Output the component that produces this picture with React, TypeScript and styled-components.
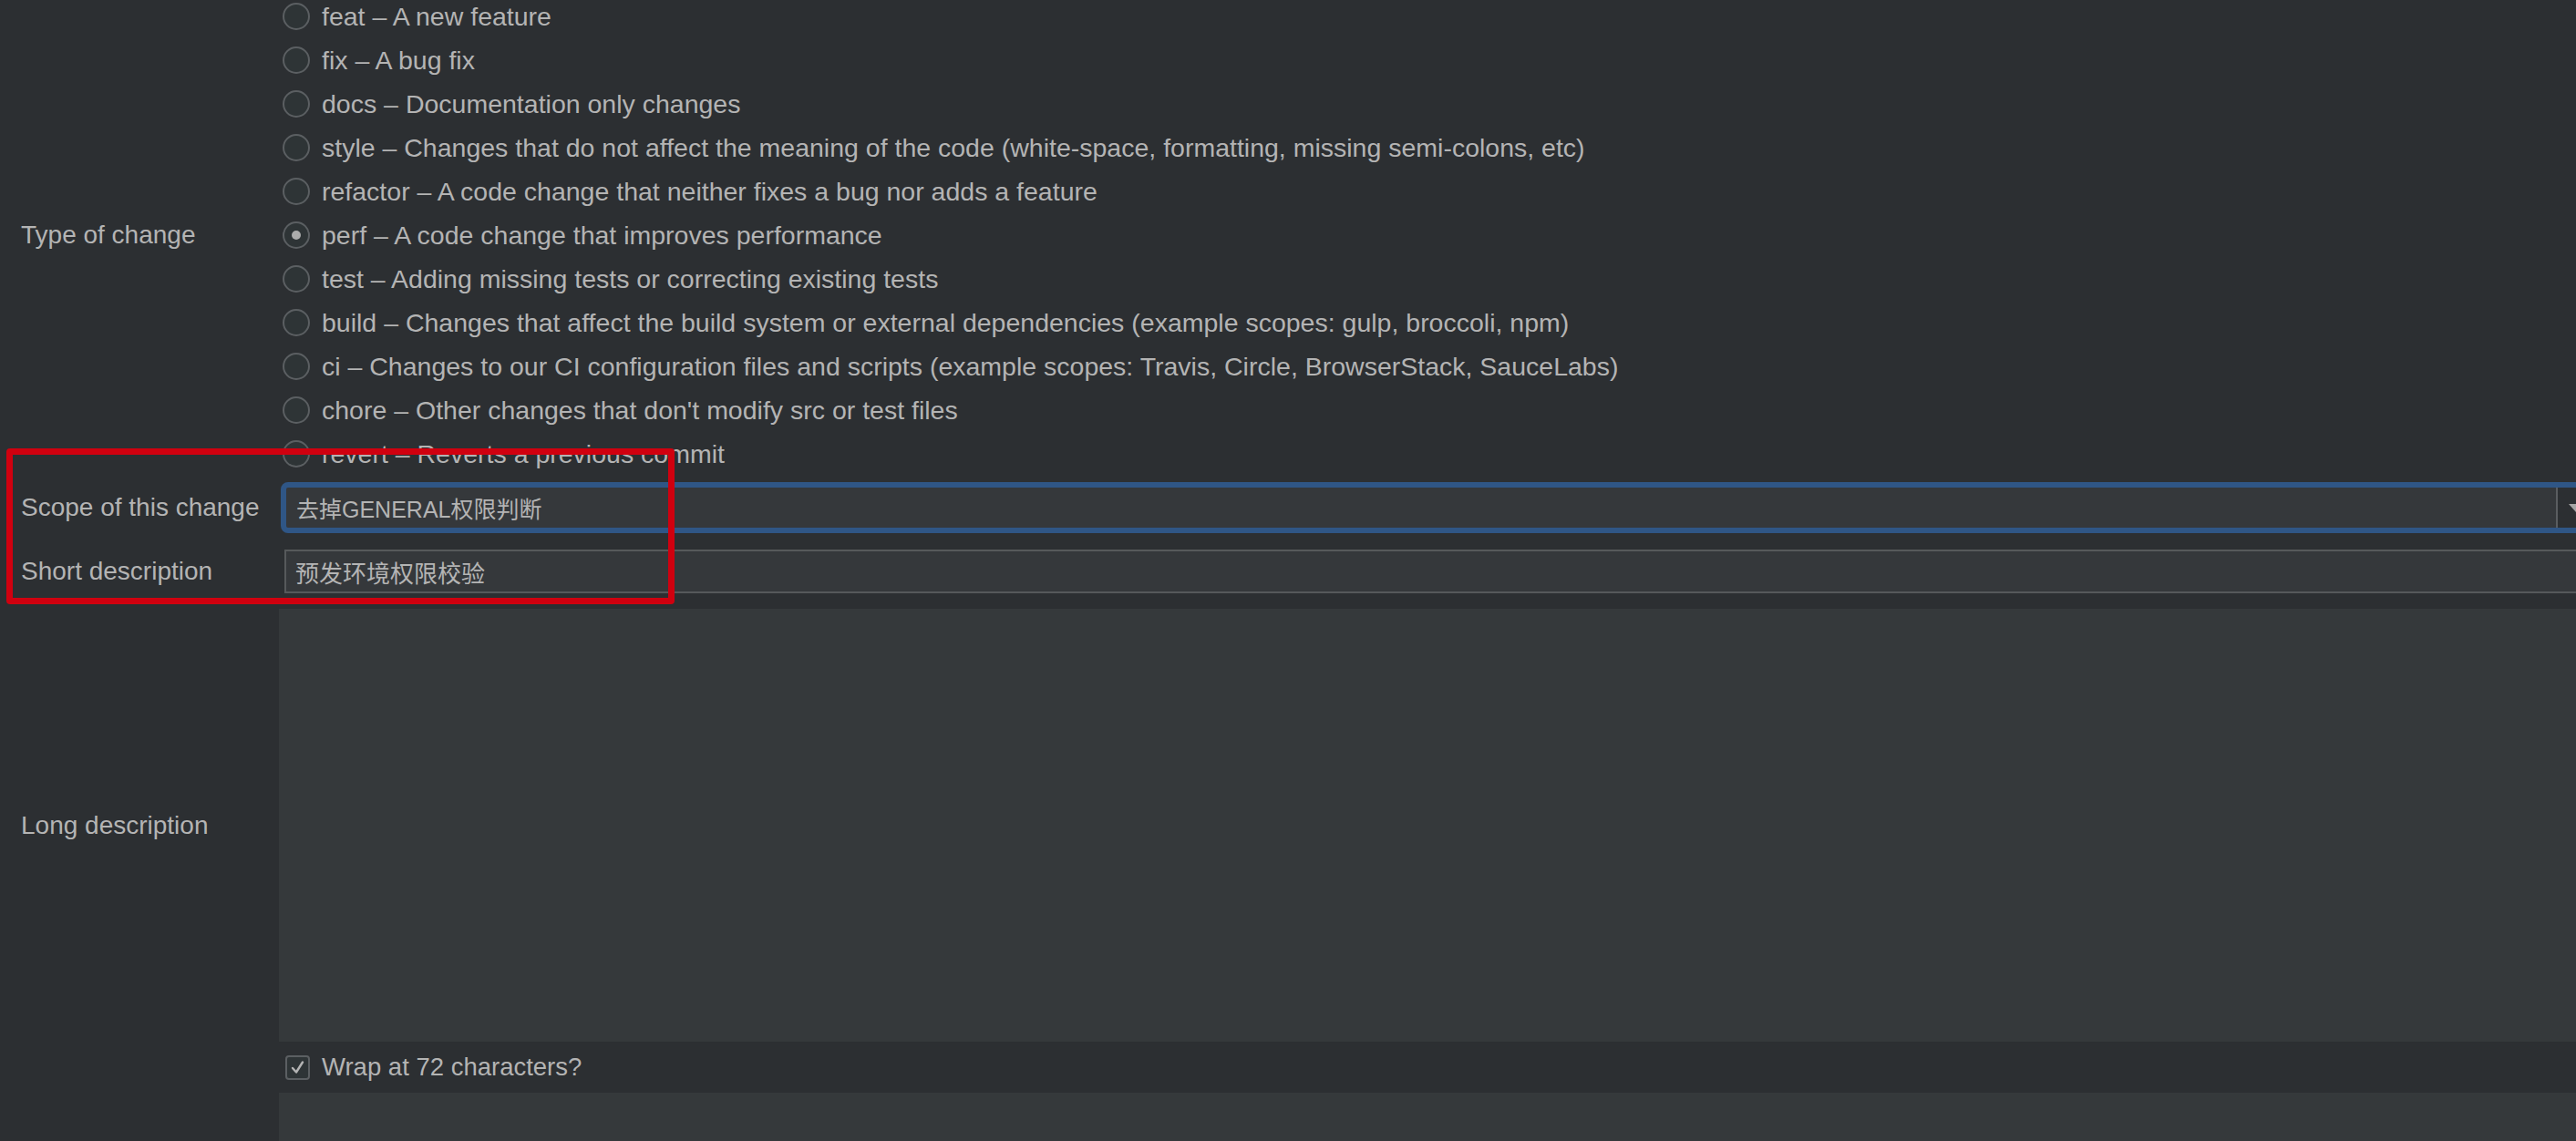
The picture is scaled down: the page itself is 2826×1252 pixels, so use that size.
import React from "react";
import styled, { createGlobalStyle } from "styled-components";

const GlobalStyle = createGlobalStyle`
  html, body {
    margin: 0;
    padding: 0;
    background: #2c2f32;
    overflow: hidden;
  }
  body {
    font-family: "Liberation Sans", Arial, "Noto Sans CJK SC", sans-serif;
    color: #b4b4b4;
  }
`;

const Page = styled.div`
  position: relative;
  width: 2852px;
  height: 1252px;
  overflow: hidden;
  background: #2c2f32;
`;

const Form = styled.div`
  display: flex;
  flex-direction: column;
  margin-top: -6px;
`;

const FormRow = styled.div<{ $gap?: number }>`
  display: grid;
  grid-template-columns: 306px 1fr;
  margin-top: ${(p) => p.$gap ?? 0}px;
`;

const Label = styled.div`
  align-self: center;
  padding-left: 23px;
  font-size: 28px;
  line-height: 32px;
  color: #b4b4b4;
  white-space: nowrap;
`;

const RadioList = styled.div`
  display: flex;
  flex-direction: column;
`;

const RadioItem = styled.div`
  display: flex;
  align-items: center;
  height: 48px;
  padding-left: 4px;
  gap: 13px;
  font-size: 28.5px;
  color: #b4b4b4;
  white-space: nowrap;
`;

const RadioCircle = styled.span<{ $checked?: boolean }>`
  box-sizing: border-box;
  width: 30px;
  height: 30px;
  border-radius: 50%;
  border: 2px solid #5b5f62;
  background: #2e3436;
  display: flex;
  align-items: center;
  justify-content: center;
  flex-shrink: 0;
  &::after {
    content: "";
    display: ${(p) => (p.$checked ? "block" : "none")};
    width: 10px;
    height: 10px;
    border-radius: 50%;
    background: #acacac;
  }
`;

const ScopeField = styled.div`
  box-sizing: border-box;
  margin-left: 2px;
  height: 56px;
  border: 6px solid #2f5686;
  border-radius: 8px;
  background: #35383b;
  display: flex;
  align-items: stretch;
`;

const FieldText = styled.div<{ $pad: number; $size: number }>`
  flex: 1;
  display: flex;
  align-items: center;
  padding-left: ${(p) => p.$pad}px;
  font-family: "Liberation Sans", Arial, "Noto Sans CJK SC", sans-serif;
  font-size: ${(p) => p.$size}px;
  color: #b4b4b4;
  white-space: nowrap;
`;

const Divider = styled.div`
  width: 2px;
  background: #5a5d60;
`;

const ArrowButton = styled.div`
  width: 40px;
  background: #2c2f32;
  display: flex;
  align-items: center;
  justify-content: center;
`;

const Triangle = styled.span`
  width: 0;
  height: 0;
  border-left: 8px solid transparent;
  border-right: 8px solid transparent;
  border-top: 9px solid #a6a6a6;
`;

const ShortField = styled.div`
  box-sizing: border-box;
  margin-left: 6px;
  height: 48px;
  border: 2px solid #56595b;
  background: #35383b;
  display: flex;
`;

const TextArea = styled.div`
  height: 475px;
  background: #35393b;
`;

const CheckRow = styled.div`
  height: 56px;
  display: flex;
  align-items: center;
  padding-left: 7px;
  gap: 13px;
  font-size: 27.5px;
  color: #b4b4b4;
  background: #2c2f32;
`;

const CheckBox = styled.span`
  box-sizing: border-box;
  width: 27px;
  height: 27px;
  border: 2px solid #5b5f62;
  border-radius: 4px;
  background: #2e3436;
  display: flex;
  align-items: center;
  justify-content: center;
`;

const BottomPanel = styled.div`
  height: 70px;
  background: #35393b;
`;

const Annotation = styled.div`
  position: absolute;
  left: 7px;
  top: 492px;
  width: 733px;
  height: 171px;
  box-sizing: border-box;
  border: 7px solid #d0000f;
  border-radius: 4px;
  pointer-events: none;
`;

const types: [string, string][] = [
  ["feat", "A new feature"],
  ["fix", "A bug fix"],
  ["docs", "Documentation only changes"],
  ["style", "Changes that do not affect the meaning of the code (white-space, formatting, missing semi-colons, etc)"],
  ["refactor", "A code change that neither fixes a bug nor adds a feature"],
  ["perf", "A code change that improves performance"],
  ["test", "Adding missing tests or correcting existing tests"],
  ["build", "Changes that affect the build system or external dependencies (example scopes: gulp, broccoli, npm)"],
  ["ci", "Changes to our CI configuration files and scripts (example scopes: Travis, Circle, BrowserStack, SauceLabs)"],
  ["chore", "Other changes that don't modify src or test files"],
  ["revert", "Reverts a previous commit"],
];

export default function App() {
  return (
    <>
      <GlobalStyle />
      <Page>
        <Form>
          <FormRow>
            <Label>Type of change</Label>
            <RadioList>
              {types.map(([k, d]) => (
                <RadioItem key={k}>
                  <RadioCircle $checked={k === "perf"} />
                  <span>{`${k} – ${d}`}</span>
                </RadioItem>
              ))}
            </RadioList>
          </FormRow>
          <FormRow $gap={7}>
            <Label>Scope of this change</Label>
            <ScopeField>
              <FieldText $pad={11} $size={25}>去掉GENERAL权限判断</FieldText>
              <Divider />
              <ArrowButton>
                <Triangle />
              </ArrowButton>
            </ScopeField>
          </FormRow>
          <FormRow $gap={18}>
            <Label>Short description</Label>
            <ShortField>
              <FieldText $pad={10} $size={26}>预发环境权限校验</FieldText>
            </ShortField>
          </FormRow>
          <FormRow $gap={17}>
            <Label>Long description</Label>
            <TextArea />
          </FormRow>
          <FormRow>
            <div />
            <CheckRow>
              <CheckBox>
                <svg width="17" height="17" viewBox="0 0 17 17">
                  <path d="M3 9 L7 13.5 L14 2.5" fill="none" stroke="#b4b4b4" strokeWidth="2.4" strokeLinecap="round" strokeLinejoin="round" />
                </svg>
              </CheckBox>
              <span>Wrap at 72 characters?</span>
            </CheckRow>
          </FormRow>
          <FormRow>
            <div />
            <BottomPanel />
          </FormRow>
        </Form>
        <Annotation />
      </Page>
    </>
  );
}
